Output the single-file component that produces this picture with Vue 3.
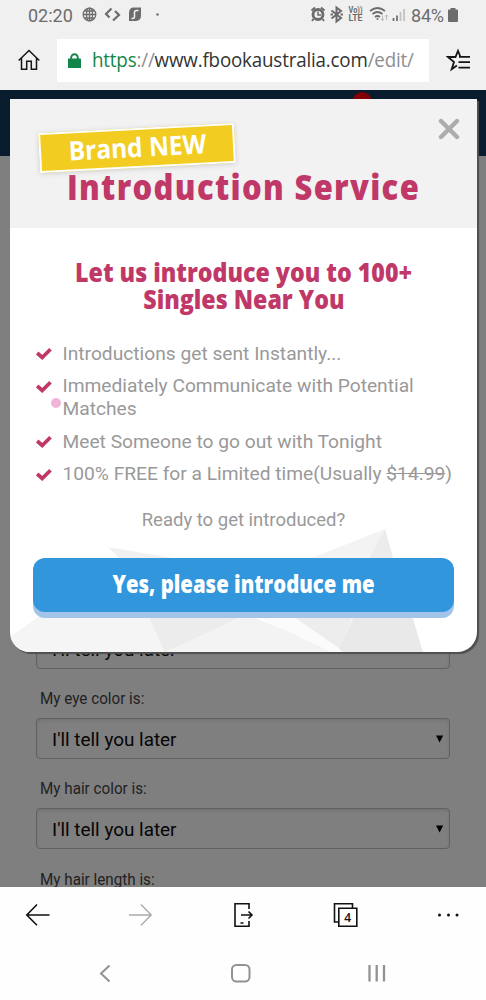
<script setup>
import { ref } from 'vue';

const showModal = ref(true);
const fields = ['My eye color is:', 'My hair color is:', 'My hair length is:'];
const perks = [
    { text: 'Introductions get sent Instantly...' },
    { text: 'Immediately Communicate with Potential Matches' },
    { text: 'Meet Someone to go out with Tonight' },
    { text: '100% FREE for a Limited time(Usually ', price: '$14.99' },
];
</script>
<template>
    <div class="phone">
        <div class="status">
            <div class="clock">02:20</div>
            <svg class="left-icons" width="80" height="20" viewBox="82 5 80 20" fill="none" stroke="#6c6c6c">
                <g stroke-width="1.3">
                    <circle cx="89.500" cy="14.500" r="6.300" />
                    <ellipse cx="89.500" cy="14.500" rx="3" ry="6.300" />
                    <path d="M89.500 8v13M83 14.500h13M84.500 11h10M84.500 18h10" />
                </g>
                <path d="M111.500 8.500l-5.500 5.500 3.500 3.500M113 20.500l6-5.500-4-4" stroke-width="2.200" />
                <path d="M133 7.500h8v8q0 5-5 5.500h-7v-8q0-5 4-5.500z" fill="#6c6c6c" stroke="none" />
                <path d="M138.500 10.500h-2q-2 0-2 2v4q0 2-2 2h-1" stroke="#f0f0f0" stroke-width="1.500" />
                <circle cx="157.500" cy="14.500" r="1.200" fill="#6c6c6c" stroke="none" />
            </svg>
            <svg class="right-icons" width="96" height="20" viewBox="309 5 96 20" fill="none" stroke="#6c6c6c">
                <circle cx="318" cy="14.500" r="5" stroke-width="2.800" />
                <path d="M318 11.500v3.500h3" stroke-width="1.500" />
                <path d="M311.500 10.500l3.500-3M324.500 10.500l-3.500-3M313.500 19l-1.500 2M322.500 19l1.500 2" stroke-width="1.900" />
                <path d="M331.500 10.500l9.500 7.500-4.500 3.500V7.500l4.500 3.500-9.500 7.500M330.500 14.500h2.500M340.500 14.500h2.500" stroke-width="2" />
                <g fill="#6c6c6c" stroke="none" font-family="Roboto, sans-serif" font-weight="700" font-size="8.500">
                    <text x="348.500" y="13" textLength="14" lengthAdjust="spacingAndGlyphs">Vo))</text>
                    <text x="348.500" y="21" textLength="14" lengthAdjust="spacingAndGlyphs">LTE</text>
                </g>
                <path d="M370 11q7.500-6 15 0M372.500 14q5-4 10 0M375 17q2.500-2 5 0" stroke-width="1.700" />
                <circle cx="377.500" cy="19" r="1" fill="#6c6c6c" stroke="none" />
                <path d="M382.500 15.500v5M381 19l1.500 1.500 1.500-1.500M386.500 20v-5M385 16.500l1.500-1.500 1.500 1.500" stroke="#aaa" stroke-width=".8" />
                <path d="M393.500 18v3M397 15.500v5.500" stroke-width="1.700" />
                <path d="M400.500 12v9M404 9v12" stroke="#c0c0c0" stroke-width="1.700" />
            </svg>
            <div class="percent">84%</div>
            <svg class="battery" width="10" height="14" viewBox="0 0 10 14"><path d="M2.500 0h5v1.500h1.500q1 0 1 1V13q0 1-1 1H1q-1 0-1-1V2.500q0-1 1-1h1.500z" fill="#6c6c6c" /></svg>
        </div>
        <div class="address">
            <svg class="home" width="24" height="24" viewBox="0 0 24 24" fill="none" stroke="#151515" stroke-width="1.500"><path d="M1.700 12.500L12 2.500l10.300 10M4.500 10v11.300h5.200v-8h4.600v8h5.200V10" /></svg>
            <div class="url">
                <svg width="13" height="15" viewBox="0 0 13 15"><path d="M3.200 7V4.500a3.300 3.300 0 0 1 6.600 0V7" fill="none" stroke="#13854a" stroke-width="1.900" /><rect y="5.500" width="13" height="9.500" rx=".5" fill="#13854a" /></svg>
                <div class="link"><b>https</b><i>://</i>www.fbookaustralia.com<i>/edit/</i></div>
            </div>
            <svg class="fav" width="26" height="24" viewBox="0 0 26 24" fill="none" stroke="#151515" stroke-width="1.800"><path d="M14.500 9L12 2.800 9.500 9H2l6 5-2.300 7.200 5.200-3.700" /><path d="M13 8.800h11M12.500 14.200H24M12.500 19.600H24" /></svg>
        </div>
        <div class="page">
            <div class="navbar"><span></span></div>
            <div class="form">
                <div class="select"><span>I'll tell you later</span></div>
                <template v-for="f in fields" :key="f">
                    <div class="label"><span>{{f}}</span></div>
                    <div class="select">
                        <span>I'll tell you later</span>
                        <svg width="8" height="8" viewBox="0 0 8 8"><path d="M0 .5h7.200L3.600 7.500z" /></svg>
                    </div>
                </template>
            </div>
            <div v-if="showModal" class="modal">
                <div class="head">
                    <div class="badge"><span>Brand NEW</span></div>
                    <svg class="close" width="22" height="22" viewBox="0 0 22 22" @click="showModal = false"><path d="M3 3l16 16M19 3L3 19" stroke="#acacac" stroke-width="4.400" stroke-linecap="round" /></svg>
                    <h1>Introduction Service</h1>
                </div>
                <div class="body">
                    <svg class="facets" width="467" height="125" viewBox="10 528 467 125">
                        <path d="M10 638L42 615 150 608 345 653H10z" fill="#f5f5f5" />
                        <path d="M108 548L190 562 210 575H135z" fill="#f1f1f1" />
                        <path d="M145 610h115L165 653z" fill="#ececec" />
                        <path d="M165 653L248 616l92 37z" fill="#f3f3f3" />
                        <path d="M312 559L385 530 378 570z" fill="#f3f3f3" />
                        <path d="M385 530L394 562 378 570 370 558z" fill="#ececec" />
                        <path d="M285 612h70L340 650z" fill="#ededed" />
                        <path d="M357 610h53l13 43h-85z" fill="#e9e9e9" />
                        <path d="M250 614h38l55 39h-12z" fill="#fbfbfb" />
                    </svg>
                    <h2><span>Let us introduce you to 100+</span><span>Singles Near You</span></h2>
                    <ul>
                        <li v-for="p in perks" :key="p.text">
                            <svg width="16" height="13" viewBox="0 0 16 13"><path d="M1.200 6l5 4.500 8.300-8.300" fill="none" stroke="#c03867" stroke-width="3.700" /></svg>
                            <div>{{p.text}}<template v-if="p.price"><s>{{p.price}}</s>)</template></div>
                        </li>
                    </ul>
                    <div class="ready">Ready to get introduced?</div>
                    <div class="yes"><span>Yes, please introduce me</span></div>
                    <div class="touch"></div>
                </div>
            </div>
        </div>
        <div class="toolbar">
            <svg width="486" height="56" viewBox="0 887 486 56" fill="none" stroke="#111" stroke-width="1.600">
                <path d="M49.500 915H27M37 904.500L26.800 915 37 925.200" />
                <path d="M129 915h22.500M141 904.500l10.200 10.500-10.200 10.200" stroke="#aaa" stroke-width="1.400" />
                <path d="M249 909v-5.300h-14v22.600h14V921M241 915h11M248.500 911.500l3.500 3.500-3.500 3.500M240.500 923h3" />
                <path d="M339 922h-4.500v-18.300h18v4.300M338.800 908.200h18v18h-18z" />
                <text x="347.800" y="921.600" text-anchor="middle" fill="#111" stroke="none" font-family="Open Sans, sans-serif" font-weight="600" font-size="12">4</text>
                <g fill="#111" stroke="none"><circle cx="439.500" cy="915" r="1.500" /><circle cx="448.500" cy="915" r="1.500" /><circle cx="457" cy="915" r="1.500" /></g>
            </svg>
        </div>
        <div class="system">
            <svg width="486" height="57" viewBox="0 943 486 57" fill="none" stroke="#929292" stroke-width="2">
                <path d="M109.500 965.500l-8.500 8 8.500 8" />
                <rect x="232" y="965" width="17.500" height="16.500" rx="4.500" />
                <path d="M369.500 965v16.500M376.700 965v16.500M384 965v16.500" stroke-width="2.300" />
            </svg>
        </div>
    </div>
</template>
<style>
body{
    margin: 0;
    overflow: hidden;
}
</style>
<style scoped>
.phone{
    width: 486px;
    height: 1000px;
    display: flex;
    flex-direction: column;
    overflow: hidden;
    background-color: #fefefe;
    font-family: Roboto, "Liberation Sans", sans-serif;
}
svg{
    display: block;
    flex-shrink: 0;
}
.status{
    height: 30px;
    box-sizing: border-box;
    padding-left: 28px;
    display: flex;
    align-items: center;
    background-color: #f0f0f0;
    color: #6c6c6c;
    font-size: 18px;
}
.clock{
    width: 54px;
}
.right-icons{
    margin-left: 147px;
}
.percent{
    width: 35px;
    margin-left: 6px;
    white-space: nowrap;
    letter-spacing: -.2px;
}
.battery{
    margin-left: 2px;
}
.address{
    height: 60px;
    box-sizing: border-box;
    padding: 0 15px 0 17px;
    display: flex;
    align-items: center;
    background-color: #f0f0f0;
}
.url{
    width: 372px;
    height: 43px;
    margin: 0 17px 0 16px;
    box-sizing: border-box;
    padding-left: 11px;
    display: flex;
    align-items: center;
    background-color: #fff;
}
.link{
    margin-left: 11px;
    white-space: nowrap;
    font-family: "Open Sans", "Noto Sans", sans-serif;
    font-size: 19.8px;
    line-height: 30px;
    letter-spacing: -.18px;
    color: #333;
    transform: scaleX(.948);
    transform-origin: left;
}
.link b{
    color: #13854a;
    font-weight: 400;
}
.link i{
    color: #8e8e8e;
    font-style: normal;
}
.page{
    height: 797px;
    flex-shrink: 0;
    position: relative;
    overflow: hidden;
    background-color: #7f7f7f;
}
.navbar{
    height: 66px;
    display: flex;
    justify-content: flex-end;
    background-color: #081c2d;
}
.navbar span{
    width: 20px;
    height: 20px;
    margin: 2px 114px 0 0;
    border-radius: 50%;
    background-color: #800006;
}
.form{
    padding: 472px 36px 0;
}
.select{
    height: 41px;
    box-sizing: border-box;
    padding: 1px 5px 0 15px;
    display: flex;
    align-items: center;
    justify-content: space-between;
    border: 1.5px solid #606060;
    border-radius: 4px;
    box-shadow: inset 0 2px 3px #747474;
    font-size: 18.9px;
    color: #050505;
}
.label{
    height: 49px;
    padding-left: 4px;
    line-height: 59px;
    color: #222;
    font-size: 17px;
}
.label + .select{
    margin-bottom: .3px;
}
.label span{
    display: inline-block;
    transform: scaleX(.895);
    transform-origin: left;
}
.modal{
    position: absolute;
    left: 10px;
    top: 9px;
    width: 467px;
    height: 553px;
    overflow: hidden;
    border-radius: 0 0 20px 20px;
    background-color: #fff;
    box-shadow: 2px 2px 1px #4f4f4f;
}
.head{
    height: 129px;
    position: relative;
    overflow: hidden;
    background-color: #f2f2f2;
}
.badge{
    position: absolute;
    left: 28.5px;
    top: 28.5px;
    width: 196px;
    height: 40px;
    box-sizing: border-box;
    border: 2px solid #fff;
    background-color: #f2cc20;
    box-shadow: 0 1px 5px #ccc;
    transform: rotate(-3deg);
    color: #fff;
    font: 700 26.5px/35px "Open Sans", sans-serif;
    text-align: center;
    white-space: nowrap;
    z-index: 1;
}
.badge span{
    display: inline-block;
    transform: scaleX(.925);
}
.close{
    position: absolute;
    right: 17px;
    top: 19px;
}
h1{
    width: 467px;
    margin: 62px 0 0;
    color: #c03867;
    font: 800 35px/52px "Open Sans", sans-serif;
    letter-spacing: 1.5px;
    text-align: center;
    white-space: nowrap;
    transform: scaleX(.885);
}
.body{
    position: relative;
    height: 424px;
}
.facets{
    position: absolute;
    left: 0;
    bottom: 0;
}
h2{
    position: relative;
    margin: 0;
    padding-top: 31px;
    display: flex;
    flex-direction: column;
    align-items: center;
    color: #c03867;
    font: 800 26.5px/27px "Open Sans", sans-serif;
    white-space: nowrap;
}
h2 span{
    transform: scaleX(.875);
}
ul{
    position: relative;
    margin: 28.5px 0 0;
    padding: 0 0 0 26px;
    list-style: none;
    font-size: 19.2px;
    line-height: 23px;
    color: #999;
}
li{
    display: flex;
    margin-bottom: 9.6px;
}
li svg{
    margin: 5.5px 10.5px 0 0;
}
li div{
    width: 400px;
}
.ready{
    position: relative;
    margin-top: 23px;
    text-align: center;
    font-size: 18.5px;
    line-height: 24px;
    color: #999;
}
.yes{
    position: relative;
    width: 421px;
    height: 54px;
    margin: 25.5px 0 0 23px;
    border-radius: 12px;
    background-color: #3296dc;
    box-shadow: 0 6px #a3c4e8;
    color: #fff;
    font: 800 24px/52px "Open Sans", sans-serif;
    text-align: center;
    white-space: nowrap;
}
.yes span{
    display: inline-block;
    transform: scaleX(.848);
}
.touch{
    position: absolute;
    left: 40.5px;
    top: 170px;
    width: 10px;
    height: 10px;
    border-radius: 50%;
    background-color: #efb4d8;
}
</style>
